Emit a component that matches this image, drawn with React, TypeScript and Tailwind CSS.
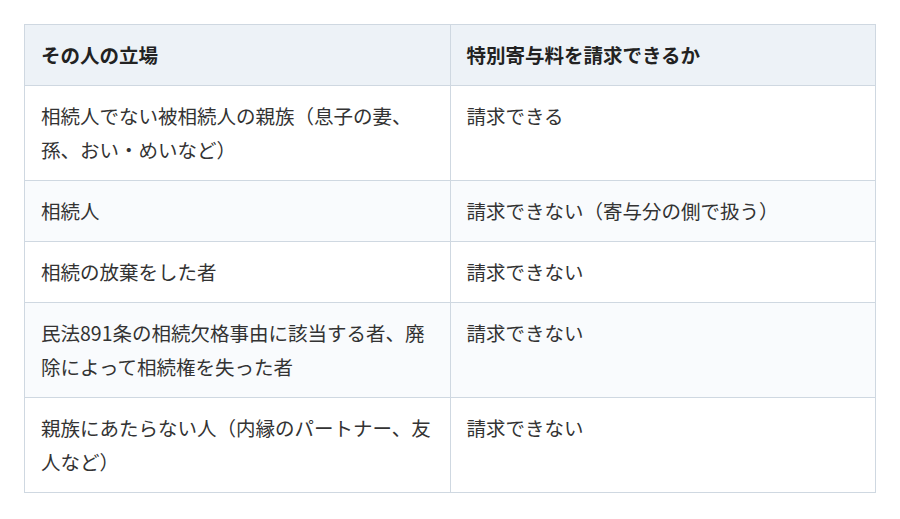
import React from "react";

const rows: [React.ReactNode, string][] = [
  [<>相続人でない被相続人の親族（息子の妻、<br />孫、おい・めいなど）</>, "請求できる"],
  ["相続人", "請求できない（寄与分の側で扱う）"],
  ["相続の放棄をした者", "請求できない"],
  [<>民法891条の相続欠格事由に該当する者、廃<br />除によって相続権を失った者</>, "請求できない"],
  [<>親族にあたらない人（内縁のパートナー、友<br />人など）</>, "請求できない"],
];

export default function App() {
  return (
    <div
      className="w-[900px] h-[519px] bg-white px-6 pt-6"
      style={{ fontFamily: '"Noto Sans CJK JP", "Noto Sans", sans-serif' }}
    >
      <table className="w-[852px] border-collapse table-fixed text-[19.5px] leading-[34px] text-[#333]">
        <colgroup>
          <col className="w-1/2" />
          <col className="w-1/2" />
        </colgroup>
        <thead>
          <tr className="bg-[#edf2f7]">
            <th className="border border-[#cfd8e1] px-4 py-[13px] text-left font-bold text-[#222]">その人の立場</th>
            <th className="border border-[#cfd8e1] px-4 py-[13px] text-left font-bold text-[#222]">特別寄与料を請求できるか</th>
          </tr>
        </thead>
        <tbody>
          {rows.map((r, i) => (
            <tr key={i} className={i % 2 === 1 ? "bg-[#f9fbfd]" : "bg-white"}>
              <td className="border border-[#cfd8e1] px-4 py-[13px] align-top">{r[0]}</td>
              <td className="border border-[#cfd8e1] px-4 py-[13px] align-top">{r[1]}</td>
            </tr>
          ))}
        </tbody>
      </table>
    </div>
  );
}
